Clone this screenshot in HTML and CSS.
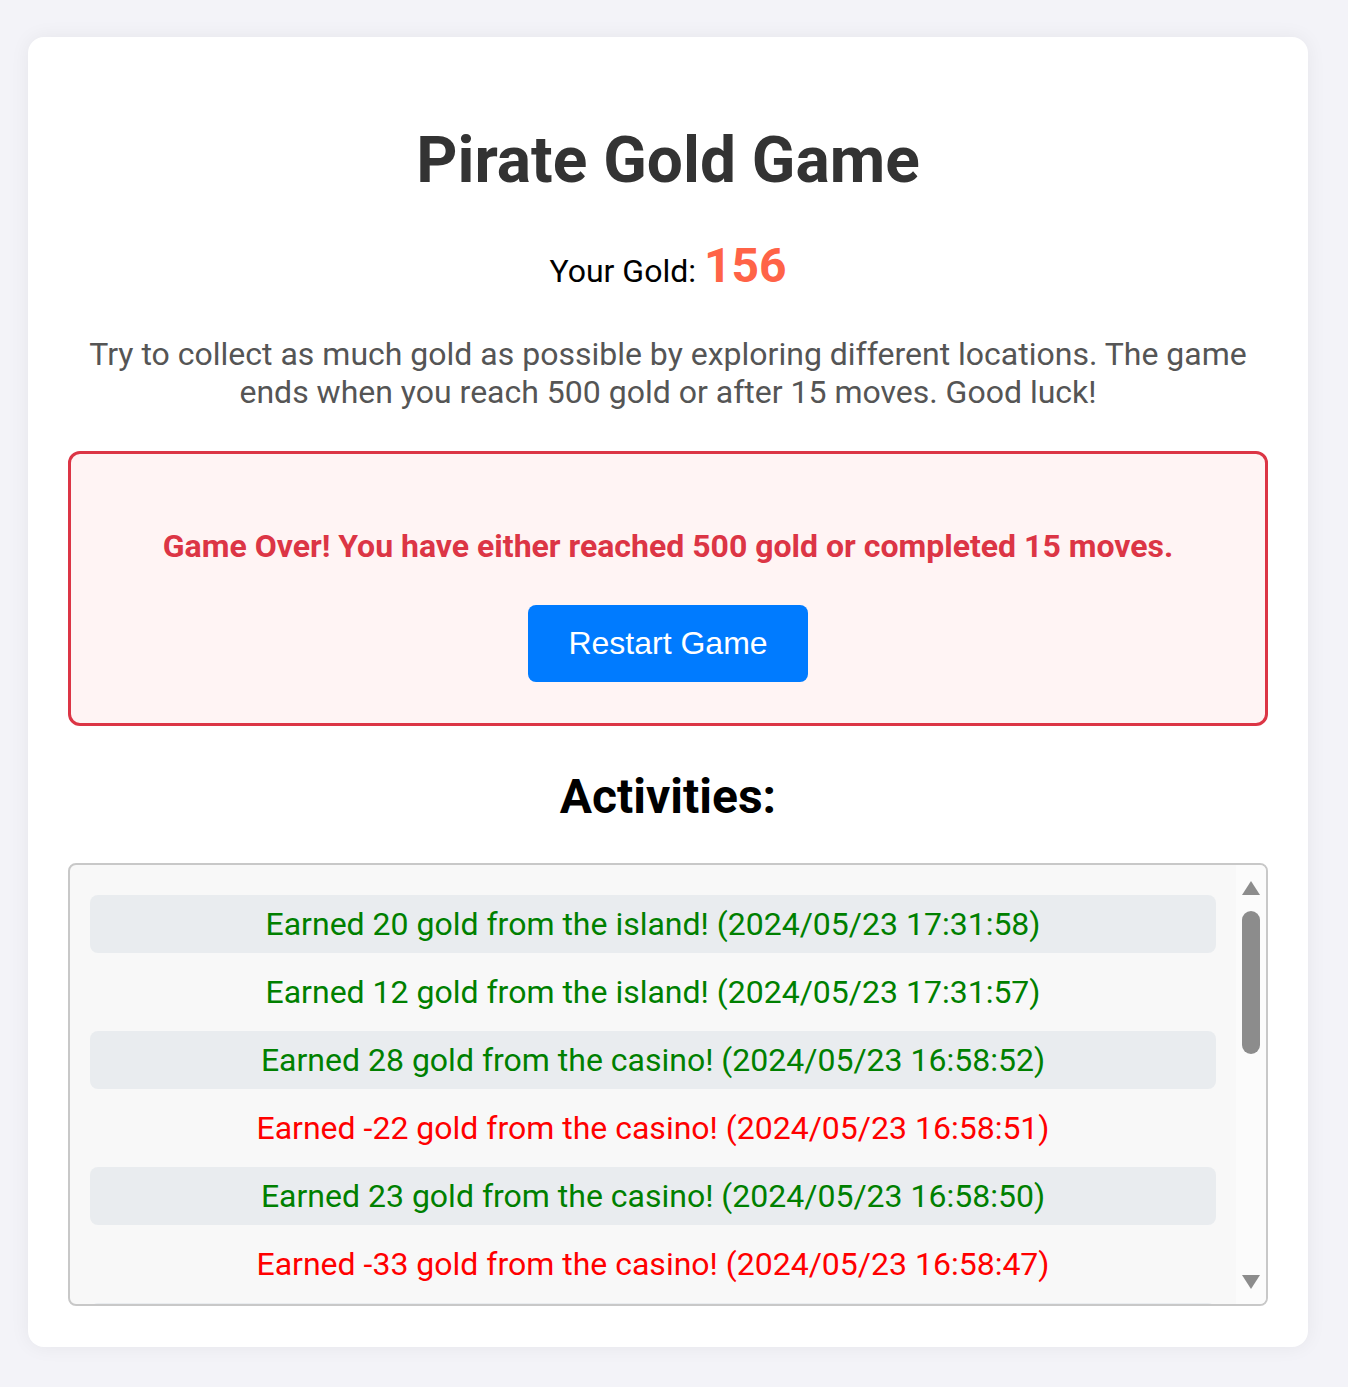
FILE: index.html
```html
<!DOCTYPE html>
<html lang="en">
<head>
<meta charset="utf-8">
<title>Pirate Gold Game</title>
<link rel="stylesheet" href="styles.css">
</head>
<body>
<main class="card">
  <h1 class="title">Pirate Gold Game</h1>
  <p class="gold">Your Gold: <span class="gold-amount">156</span></p>
  <p class="intro">Try to collect as much gold as possible by exploring different locations. The game ends when you reach 500 gold or after 15 moves. Good luck!</p>
  <section class="game-over">
    <p class="game-over-text">Game Over! You have either reached 500 gold or completed 15 moves.</p>
    <button class="restart" type="button">Restart Game</button>
  </section>
  <h2 class="activities-title">Activities:</h2>
  <div class="log">
    <ul class="log-list">
      <li class="log-item shaded gain">Earned 20 gold from the island! (2024/05/23 17:31:58)</li>
      <li class="log-item gain">Earned 12 gold from the island! (2024/05/23 17:31:57)</li>
      <li class="log-item shaded gain">Earned 28 gold from the casino! (2024/05/23 16:58:52)</li>
      <li class="log-item loss">Earned -22 gold from the casino! (2024/05/23 16:58:51)</li>
      <li class="log-item shaded gain">Earned 23 gold from the casino! (2024/05/23 16:58:50)</li>
      <li class="log-item loss">Earned -33 gold from the casino! (2024/05/23 16:58:47)</li>
      <li class="log-item shaded gain">Earned 17 gold from the island! (2024/05/23 16:58:45)</li>
    </ul>
    <div class="scrollbar" aria-hidden="true">
      <span class="arrow arrow-up"></span>
      <span class="thumb"></span>
      <span class="track-fill"></span>
      <span class="arrow arrow-down"></span>
    </div>
  </div>
</main>
</body>
</html>
```
FILE: styles.css
```css
html, body {
  margin: 0;
  padding: 0;
}
body {
  background: #f3f3f8;
  font-family: Roboto, "Liberation Sans", Arial, sans-serif;
  padding: 37px 40px 40px 28px;
}
.card {
  box-sizing: border-box;
  width: 1280px;
  background: #fff;
  border-radius: 16px;
  box-shadow: 0 0 20px rgba(0, 0, 0, 0.06);
  padding: 40px 40px 41px;
  text-align: center;
}
.title {
  margin: 46px 0 0;
  font-size: 64px;
  font-weight: 700;
  color: #333;
  line-height: normal;
}
.gold {
  margin: 40px 0 0;
  font-size: 32px;
  color: #000;
  line-height: 56px;
}
.gold-amount {
  font-size: 48px;
  font-weight: 700;
  color: #ff6347;
}
.intro {
  margin: 36px 0 0;
  font-size: 32px;
  color: #555;
  line-height: normal;
}
.game-over {
  display: flex;
  flex-direction: column;
  align-items: center;
  margin-top: 40px;
  border: 3px solid #dc3545;
  border-radius: 12px;
  background: #fff4f4;
  padding: 73px 20px 41px;
}
.game-over-text {
  margin: 0;
  font-size: 32px;
  font-weight: 700;
  color: #dc3545;
  line-height: normal;
}
.restart {
  margin-top: 40px;
  font-family: "Liberation Sans", Arial, sans-serif;
  font-size: 32px;
  color: #fff;
  background: #007bff;
  border: none;
  border-radius: 8px;
  padding: 20px 40px;
  line-height: 37px;
}
.activities-title {
  margin: 42px 0 0;
  font-size: 48px;
  font-weight: 700;
  color: #000;
  line-height: normal;
}
.log {
  display: flex;
  margin-top: 38px;
  height: 443px;
  box-sizing: border-box;
  border: 2px solid #c8c8c8;
  border-radius: 8px;
  background: #f8f8f8;
  overflow: hidden;
}
.log-list {
  flex: 1;
  list-style: none;
  margin: 0;
  padding: 30px 20px 0;
  overflow: hidden;
}
.log-item {
  height: 58px;
  margin-bottom: 10px;
  border-radius: 8px;
  font-size: 32px;
  line-height: 58px;
}
.shaded {
  background: #e9ecef;
}
.gain {
  color: #008000;
}
.loss {
  color: #f00;
}
.scrollbar {
  width: 30px;
  display: flex;
  flex-direction: column;
  align-items: center;
  background: #fbfbfb;
}
.arrow {
  width: 0;
  height: 0;
  border-left: 9px solid transparent;
  border-right: 9px solid transparent;
}
.arrow-up {
  margin-top: 16px;
  border-bottom: 14px solid #8c8c8c;
}
.thumb {
  margin-top: 16px;
  width: 18px;
  height: 143px;
  border-radius: 9px;
  background: #8c8c8c;
}
.track-fill {
  flex: 1;
}
.arrow-down {
  margin-bottom: 15px;
  border-top: 14px solid #8c8c8c;
}
```
